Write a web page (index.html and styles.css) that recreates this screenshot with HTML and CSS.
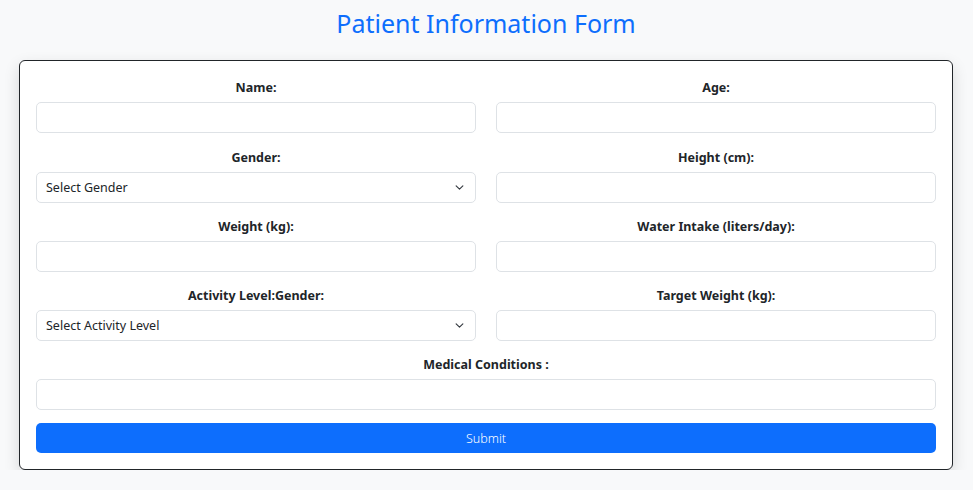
FILE: index.html
```html
<!DOCTYPE html>
<html lang="en">
<head>
<meta charset="utf-8">
<title>Patient Information Form</title>
<link rel="stylesheet" href="styles.css">
</head>
<body>
  <h1 class="title">Patient Information Form</h1>
  <form class="card">
    <div class="grid">
      <div class="field first">
        <label class="label">Name:</label>
        <input class="control" type="text">
      </div>
      <div class="field first">
        <label class="label">Age:</label>
        <input class="control" type="text">
      </div>
      <div class="field">
        <label class="label">Gender:</label>
        <select class="control select"><option>Select Gender</option></select>
      </div>
      <div class="field">
        <label class="label">Height (cm):</label>
        <input class="control" type="text">
      </div>
      <div class="field">
        <label class="label">Weight (kg):</label>
        <input class="control" type="text">
      </div>
      <div class="field">
        <label class="label">Water Intake (liters/day):</label>
        <input class="control" type="text">
      </div>
      <div class="field">
        <label class="label">Activity Level:Gender:</label>
        <select class="control select"><option>Select Activity Level</option></select>
      </div>
      <div class="field">
        <label class="label">Target Weight (kg):</label>
        <input class="control" type="text">
      </div>
      <div class="field full">
        <label class="label">Medical Conditions :</label>
        <input class="control" type="text">
      </div>
    </div>
    <button class="submit" type="button">Submit</button>
  </form>
</body>
</html>
```
FILE: styles.css
```css
* { box-sizing: border-box; }
html, body { margin: 0; padding: 0; }
body {
  background: #f8f9fa;
  font-family: "Noto Sans", "Open Sans", sans-serif;
  color: #212529;
  padding: 0 20px 0 19px;
}
.title {
  margin: 0;
  padding-top: 6px;
  height: 60px;
  text-align: center;
  font-weight: 400;
  font-size: 25px;
  line-height: 34px;
  color: #0d6efd;
}
.card {
  width: 934px;
  background: #fff;
  border: 1px solid #212529;
  border-radius: 6px;
  padding: 17px 16px 16px;
  box-shadow: 0 6px 16px rgba(0,0,0,0.14);
}
.grid {
  display: grid;
  grid-template-columns: 440px 440px;
  column-gap: 20px;
}
.field {
  display: flex;
  flex-direction: column;
  margin-bottom: 14px;
}
.field.first { margin-bottom: 15px; }
.field.full { grid-column: 1 / 3; margin-bottom: 13px; }
.label {
  text-align: center;
  font-size: 12.5px;
  font-weight: 700;
  line-height: 19px;
  margin-bottom: 5px;
  color: #212529;
}
.control {
  height: 31px;
  border: 1px solid #dee2e6;
  border-radius: 5px;
  background: #fff;
  font-family: inherit;
  font-size: 12.5px;
  color: #212529;
  padding: 0 9px;
  outline: none;
}
.select {
  appearance: none;
  -webkit-appearance: none;
  background-image: url("data:image/svg+xml,%3csvg xmlns='http://www.w3.org/2000/svg' viewBox='0 0 16 16'%3e%3cpath fill='none' stroke='%23343a40' stroke-linecap='round' stroke-linejoin='round' stroke-width='2' d='m2 5 6 6 6-6'/%3e%3c/svg%3e");
  background-repeat: no-repeat;
  background-position: right 10px center;
  background-size: 11px 9px;
}
.submit {
  display: block;
  width: 100%;
  height: 30px;
  border: 0;
  border-radius: 5px;
  background: #0d6efd;
  color: #fff;
  font-family: inherit;
  font-size: 12.5px;
  font-weight: 300;
}
```
